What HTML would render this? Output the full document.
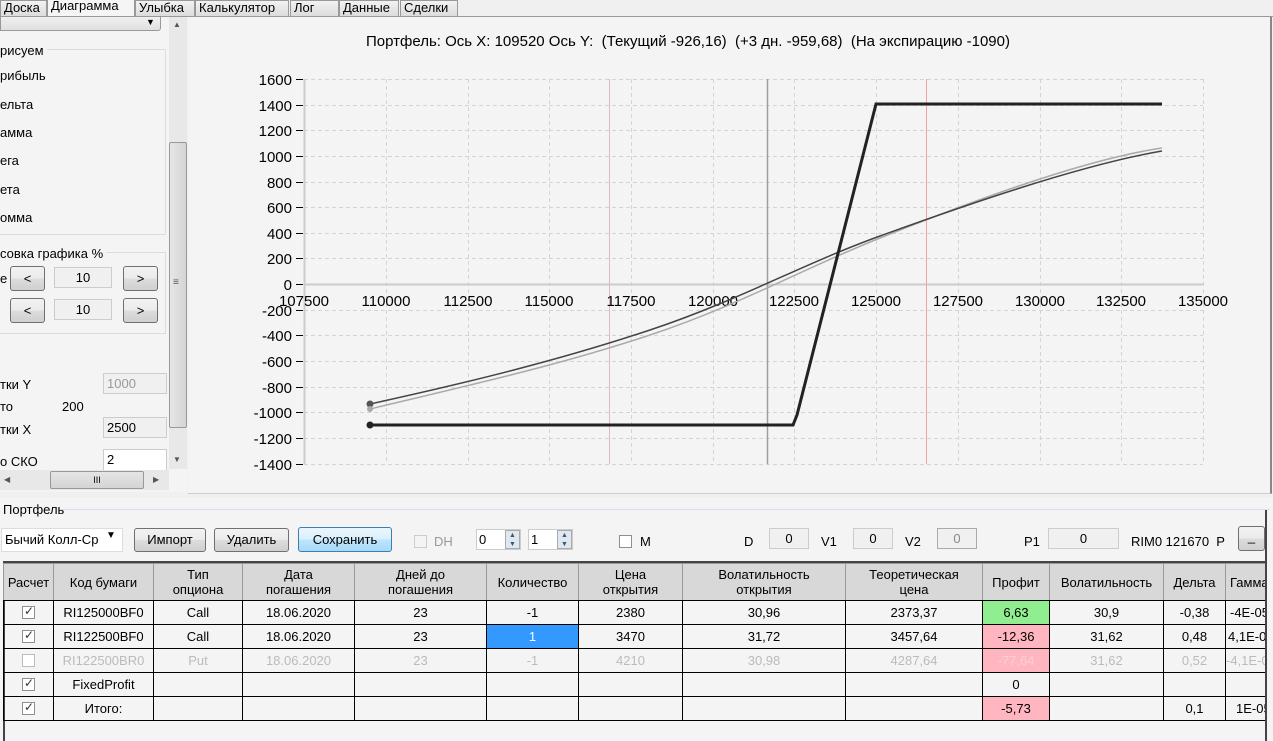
<!DOCTYPE html>
<html><head><meta charset="utf-8"><style>
*{margin:0;padding:0;box-sizing:border-box}
body{width:1273px;height:741px;background:#f0f0f0;font-family:"Liberation Sans",sans-serif;font-size:13px;color:#000;position:relative;overflow:hidden}
.a{position:absolute}
.tab{position:absolute;top:0;height:16px;border:1px solid #999;border-bottom:none;background:linear-gradient(#f2f2f2,#dcdcdc);font-size:13px;line-height:14px;padding:0 3px}
.btn{position:absolute;border:1px solid #707070;border-radius:3px;background:linear-gradient(#f2f2f2,#ebebeb 50%,#dddddd 50%,#cfcfcf);text-align:center;font-size:13px}
.box{position:absolute;border:1px solid #ccc;background:#f0f0f0;text-align:center;font-size:13px}
.cb{position:absolute;width:13px;height:13px;border:1px solid #8f8f8f;background:#fff}
.cb.on::after{content:"✓";position:absolute;left:1px;top:-3px;font-size:12px;color:#334}
.tw{position:absolute;left:3px;top:563px;width:1262px;height:160px;overflow:hidden}
table{border-collapse:collapse;table-layout:fixed;width:1302px}
td{border:1px solid #000;text-align:center;height:24px;font-size:13px;white-space:nowrap;overflow:hidden;padding:0}
th{border:1px solid #999;border-bottom:1px solid #000;background:#d8d8d8;font-weight:normal;height:37px;font-size:13px;line-height:15px;overflow:hidden;white-space:nowrap}
.g td{color:#bbb}
</style></head><body>
<div class="tab" style="left:0;width:47px">Доска</div>
<div class="tab" style="left:47px;width:88px;top:-2px;height:20px;background:#f5f5f5">Диаграмма</div>
<div class="tab" style="left:135px;width:60px">Улыбка</div>
<div class="tab" style="left:195px;width:94px">Калькулятор</div>
<div class="tab" style="left:290px;width:49px">Лог</div>
<div class="tab" style="left:339px;width:60px">Данные</div>
<div class="tab" style="left:400px;width:58px">Сделки</div>
<div class="a" style="left:0;top:16px;width:1273px;height:1px;background:#999"></div>
<div class="a" style="left:0;top:17px;width:187px;height:475px;background:#f4f4f4"></div>
<div class="a" style="left:0;top:17px;width:161px;height:14px;border:1px solid #999;border-top:none;border-radius:0 0 3px 0;background:linear-gradient(#f0f0f0,#e0e0e0)"></div>
<div class="a" style="left:146px;top:17px;font-size:9px">▼</div>
<div class="a" style="left:0;top:49px;width:166px;height:186px;border:1px solid #ddd;border-left:none"></div>
<div class="a" style="left:0;top:43px;background:#f4f4f4;padding-right:3px">рисуем</div>
<div class="a" style="left:0;top:68px">рибыль</div>
<div class="a" style="left:0;top:97px">ельта</div>
<div class="a" style="left:0;top:125px">амма</div>
<div class="a" style="left:0;top:153px">ега</div>
<div class="a" style="left:0;top:182px">ета</div>
<div class="a" style="left:0;top:210px">омма</div>
<div class="a" style="left:0;top:252px;width:166px;height:82px;border:1px solid #ddd;border-left:none"></div>
<div class="a" style="left:0;top:246px;background:#f4f4f4;padding-right:3px">совка графика %</div>
<div class="a" style="left:0;top:271px">е</div>
<div class="btn" style="left:10px;top:266px;width:35px;height:25px;line-height:23px">&lt;</div>
<div class="box" style="left:54px;top:267px;width:58px;height:21px;line-height:19px">10</div>
<div class="btn" style="left:123px;top:266px;width:35px;height:25px;line-height:23px">&gt;</div>
<div class="btn" style="left:10px;top:298px;width:35px;height:25px;line-height:23px">&lt;</div>
<div class="box" style="left:54px;top:299px;width:58px;height:21px;line-height:19px">10</div>
<div class="btn" style="left:123px;top:298px;width:35px;height:25px;line-height:23px">&gt;</div>
<div class="a" style="left:0;top:377px">тки Y</div>
<div class="box" style="left:103px;top:373px;width:64px;height:21px;color:#999;text-align:left;padding-left:3px;line-height:19px">1000</div>
<div class="a" style="left:0;top:399px">то</div>
<div class="a" style="left:62px;top:399px">200</div>
<div class="a" style="left:0;top:422px">тки X</div>
<div class="box" style="left:103px;top:417px;width:64px;height:21px;text-align:left;padding-left:3px;line-height:19px">2500</div>
<div class="a" style="left:0;top:454px">о СКО</div>
<div class="box" style="left:103px;top:449px;width:64px;height:22px;background:#fff;text-align:left;padding-left:3px;line-height:20px">2</div>
<div class="a" style="left:169px;top:17px;width:18px;height:452px;background:#e8e8e8"></div>
<div class="a" style="left:173px;top:20px;font-size:8px;color:#555">▲</div>
<div class="a" style="left:169px;top:142px;width:18px;height:286px;border:1px solid #999;border-radius:2px;background:linear-gradient(90deg,#e6e6e6,#d4d4d4)"></div>
<div class="a" style="left:173px;top:277px;font-size:10px;color:#555">≡</div>
<div class="a" style="left:173px;top:455px;font-size:8px;color:#555">▼</div>
<div class="a" style="left:0;top:470px;width:169px;height:20px;background:#e8e8e8"></div>
<div class="a" style="left:4px;top:475px;font-size:8px;color:#555">◀</div>
<div class="a" style="left:50px;top:471px;width:94px;height:18px;border:1px solid #999;border-radius:2px;background:linear-gradient(#e6e6e6,#d4d4d4);text-align:center;font-size:9px;line-height:16px">III</div>
<div class="a" style="left:153px;top:475px;font-size:8px;color:#555">▶</div>
<div class="a" style="left:188px;top:17px;width:1084px;height:477px;background:#f4f4f4;border-right:2px solid #888;border-bottom:1px solid #ccc"></div>
<div class="a" style="left:366px;top:33px;font-size:15px;white-space:nowrap">Портфель: Ось X: 109520 Ось Y:&nbsp; (Текущий -926,16)&nbsp; (+3 дн. -959,68)&nbsp; (На экспирацию -1090)</div>
<svg class="a" style="left:0;top:0" width="1273" height="495">
<g stroke="#d4d4d4" stroke-dasharray="4,3" fill="none">
<path d="M304 79.5H1203M304 105.5H1203M304 130.5H1203M304 156.5H1203M304 182.5H1203M304 207.5H1203M304 233.5H1203M304 258.5H1203M304 310.5H1203M304 335.5H1203M304 361.5H1203M304 387.5H1203M304 412.5H1203M304 438.5H1203M304 464.5H1203"/>
<path d="M386.5 79V464M468.5 79V464M549.5 79V464M631.5 79V464M713.5 79V464M794.5 79V464M876.5 79V464M958.5 79V464M1040.5 79V464M1121.5 79V464M1203.5 79V464"/>
</g>
<path d="M304.5 79V464M304 284.5H1203" stroke="#ccc" stroke-width="2"/>
<path d="M609.5 79V464M926.5 79V464" stroke="#f5a0a8"/>
<path d="M609.5 79V464" stroke="#ccc" opacity=".6"/>
<path d="M767.5 79V464" stroke="#9aa0a8" stroke-width="1.5"/>
<g stroke="#000"><path d="M296 79.5h7M296 105.5h7M296 130.5h7M296 156.5h7M296 182.5h7M296 207.5h7M296 233.5h7M296 258.5h7M296 284.5h7M296 310.5h7M296 335.5h7M296 361.5h7M296 387.5h7M296 412.5h7M296 438.5h7M296 464.5h7"/></g>
<g font-family="Liberation Sans" font-size="15" text-anchor="end">
<text x="292" y="85">1600</text><text x="292" y="111">1400</text><text x="292" y="136">1200</text><text x="292" y="162">1000</text><text x="292" y="188">800</text><text x="292" y="213">600</text><text x="292" y="239">400</text><text x="292" y="264">200</text><text x="292" y="290">0</text><text x="292" y="316">-200</text><text x="292" y="341">-400</text><text x="292" y="367">-600</text><text x="292" y="393">-800</text><text x="292" y="418">-1000</text><text x="292" y="444">-1200</text><text x="292" y="470">-1400</text>
</g>
<g font-family="Liberation Sans" font-size="15" text-anchor="middle">
<text x="304" y="306">107500</text><text x="386" y="306">110000</text><text x="468" y="306">112500</text><text x="549" y="306">115000</text><text x="631" y="306">117500</text><text x="713" y="306">120000</text><text x="794" y="306">122500</text><text x="876" y="306">125000</text><text x="958" y="306">127500</text><text x="1040" y="306">130000</text><text x="1121" y="306">132500</text><text x="1203" y="306">135000</text>
</g>
<path d="M370 409 C470 385 560 365 650 335 S800 270 880 238 S1080 160 1162 148" stroke="#aaa" stroke-width="1.5" fill="none"/>
<path d="M370 404 C470 382 560 360 650 330 S800 265 880 236 S1080 165 1162 151" stroke="#444" stroke-width="1.5" fill="none"/>
<path d="M370 425H793L797 415L876 104H1162" stroke="#222" stroke-width="3" fill="none"/>
<circle cx="370" cy="404" r="3.5" fill="#555"/><circle cx="370" cy="409" r="3" fill="#aaa"/><circle cx="370" cy="425" r="3.5" fill="#222"/>
</svg>
<div class="a" style="left:0;top:498px;width:1273px;height:243px;background:#f4f4f4"></div>
<div class="a" style="left:60px;top:509px;width:1210px;height:1px;background:#dde"></div>
<div class="a" style="left:3px;top:502px">Портфель</div>
<div class="a" style="left:1px;top:528px;width:122px;height:24px;background:#fff;border:1px solid #ddd;line-height:22px;padding-left:3px;white-space:nowrap;overflow:hidden">Бычий Колл-Ср</div>
<div class="a" style="left:106px;top:530px;font-size:10px">▼</div>
<div class="btn" style="left:134px;top:528px;width:72px;height:24px;line-height:22px">Импорт</div>
<div class="btn" style="left:214px;top:528px;width:75px;height:24px;line-height:22px">Удалить</div>
<div class="btn" style="left:298px;top:527px;width:94px;height:25px;line-height:23px;border-color:#3c7fb1;background:linear-gradient(#eaf6fd,#d9f0fc 50%,#bee6fd 50%,#a7d9f5)">Сохранить</div>
<div class="cb" style="left:414px;top:535px;border-color:#ccc;background:#f4f4f4"></div>
<div class="a" style="left:434px;top:534px;color:#999">DH</div>
<div class="a" style="left:476px;top:529px;width:45px;height:21px;background:#fff;border:1px solid #ccc;padding-left:2px;line-height:19px">0</div>
<div class="a" style="left:505px;top:530px;width:15px;height:19px;background:#dfe8f0;border:1px solid #aaa;font-size:7px;line-height:9px;text-align:center;color:#456">▲<br>▼</div>
<div class="a" style="left:528px;top:529px;width:45px;height:21px;background:#fff;border:1px solid #ccc;padding-left:2px;line-height:19px">1</div>
<div class="a" style="left:557px;top:530px;width:15px;height:19px;background:#dfe8f0;border:1px solid #aaa;font-size:7px;line-height:9px;text-align:center;color:#456">▲<br>▼</div>
<div class="cb" style="left:619px;top:535px"></div>
<div class="a" style="left:640px;top:534px">M</div>
<div class="a" style="left:744px;top:534px">D</div>
<div class="box" style="left:769px;top:528px;width:40px;height:21px;line-height:19px">0</div>
<div class="a" style="left:821px;top:534px">V1</div>
<div class="box" style="left:853px;top:528px;width:40px;height:21px;line-height:19px">0</div>
<div class="a" style="left:905px;top:534px">V2</div>
<div class="box" style="left:937px;top:528px;width:40px;height:21px;line-height:19px;border-color:#aaa;color:#888">0</div>
<div class="a" style="left:1024px;top:534px">P1</div>
<div class="box" style="left:1048px;top:528px;width:71px;height:21px;line-height:19px">0</div>
<div class="a" style="left:1131px;top:534px;white-space:nowrap">RIM0 121670&nbsp; P</div>
<div class="btn" style="left:1238px;top:526px;width:27px;height:25px;line-height:20px">_</div>
<div class="a" style="left:1265px;top:510px;width:2px;height:231px;background:#444"></div>
<div class="a" style="left:3px;top:561px;width:1264px;height:180px;border:2px solid #444;border-bottom:none;border-right:none"></div>
<div class="tw">
<table>
<colgroup><col style="width:50px"><col style="width:100px"><col style="width:89px"><col style="width:112px"><col style="width:132px"><col style="width:92px"><col style="width:104px"><col style="width:163px"><col style="width:137px"><col style="width:67px"><col style="width:114px"><col style="width:62px"><col style="width:80px"></colgroup>
<tr><th>Расчет</th><th>Код бумаги</th><th>Тип<br>опциона</th><th>Дата<br>погашения</th><th>Дней до<br>погашения</th><th>Количество</th><th>Цена<br>открытия</th><th>Волатильность<br>открытия</th><th>Теоретическая<br>цена</th><th>Профит</th><th>Волатильность</th><th>Дельта</th><th style="text-align:left;padding-left:4px">Гамма</th></tr>
<tr><td style="position:relative"><span class="cb on" style="left:18px;top:5px"></span></td><td>RI125000BF0</td><td>Call</td><td>18.06.2020</td><td>23</td><td>-1</td><td>2380</td><td>30,96</td><td>2373,37</td><td style="background:#90ee90">6,63</td><td>30,9</td><td>-0,38</td><td style="text-align:left;padding-left:4px">-4E-05</td></tr>
<tr><td style="position:relative"><span class="cb on" style="left:18px;top:5px"></span></td><td>RI122500BF0</td><td>Call</td><td>18.06.2020</td><td>23</td><td style="background:#3399ff;color:#fff">1</td><td>3470</td><td>31,72</td><td>3457,64</td><td style="background:#ffb6c1">-12,36</td><td>31,62</td><td>0,48</td><td style="text-align:left;padding-left:2px">4,1E-05</td></tr>
<tr class="g"><td style="position:relative"><span class="cb" style="left:18px;top:5px;border-color:#bbb"></span></td><td>RI122500BR0</td><td>Put</td><td>18.06.2020</td><td>23</td><td>-1</td><td>4210</td><td>30,98</td><td>4287,64</td><td style="background:#ffb6c1;color:#f8d0d6">-77,64</td><td>31,62</td><td>0,52</td><td style="text-align:left">-4,1E-05</td></tr>
<tr><td style="position:relative"><span class="cb on" style="left:18px;top:5px"></span></td><td>FixedProfit</td><td></td><td></td><td></td><td></td><td></td><td></td><td></td><td>0</td><td></td><td></td><td></td></tr>
<tr><td style="position:relative"><span class="cb on" style="left:18px;top:5px"></span></td><td>Итого:</td><td></td><td></td><td></td><td></td><td></td><td></td><td></td><td style="background:#ffb6c1">-5,73</td><td></td><td>0,1</td><td style="text-align:left;padding-left:10px">1E-05</td></tr>
</table>
</div>
</body></html>
